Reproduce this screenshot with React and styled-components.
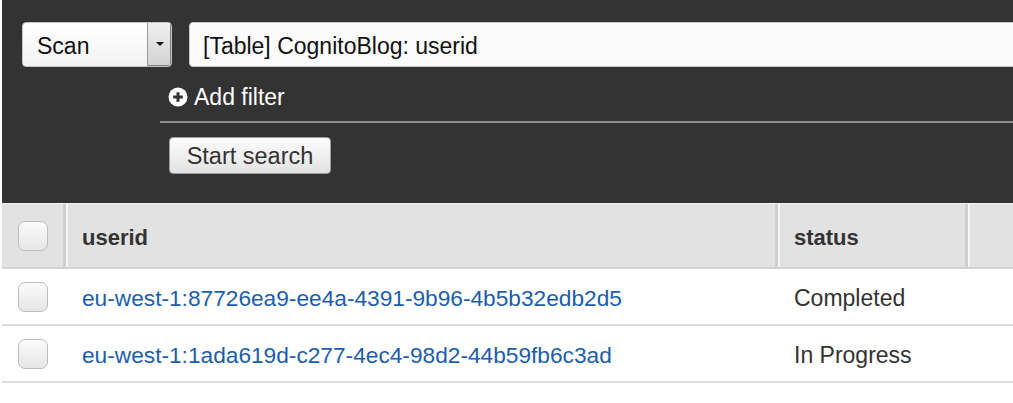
import React from "react";
import styled, { createGlobalStyle } from "styled-components";

const Global = createGlobalStyle`
  html, body { margin: 0; padding: 0; background: #fff; }
  body { font-family: "Liberation Sans", Arial, Helvetica, sans-serif; overflow: hidden; }
  * { box-sizing: border-box; }
`;

const Page = styled.div`
  width: 1013px;
  height: 403px;
  padding-left: 2px;
  background: #fff;
  overflow: hidden;
`;

const Panel = styled.div`
  background: #333333;
  padding: 22px 0 30px 20px;
  overflow: hidden;
  height: 203px;
`;

const TopRow = styled.div`
  display: flex;
  gap: 17px;
  height: 45px;
`;

const Select = styled.div`
  width: 150px;
  flex-shrink: 0;
  display: flex;
  border: 1px solid #c4c4c4;
  border-radius: 4px;
  background: linear-gradient(#ffffff, #f3f3f3);
  overflow: hidden;
`;

const SelectValue = styled.div`
  flex: 1;
  display: flex;
  align-items: center;
  padding: 3px 0 0 14px;
  font-size: 23px;
  color: #111;
`;

const SelectArrow = styled.div`
  width: 24px;
  display: flex;
  align-items: center;
  justify-content: center;
  background: linear-gradient(#f0f0f0, #d2d2d2);
  border-left: 1px solid #9a9a9a;
  box-shadow: inset -1px -1px 0 #808080;
  &::after {
    content: "";
    border-left: 4px solid transparent;
    border-right: 4px solid transparent;
    border-top: 4px solid #111;
    margin-top: -2px;
  }
`;

const TextInput = styled.div`
  width: 900px;
  flex-shrink: 0;
  display: flex;
  align-items: center;
  padding: 3px 0 0 13px;
  border: 1px solid #c8c8c8;
  border-radius: 4px;
  background: #fbfbfb;
  font-size: 23px;
  color: #111;
`;

const FilterArea = styled.div`
  margin-left: 138px;
`;

const AddFilter = styled.div`
  display: flex;
  align-items: center;
  gap: 6px;
  height: 24px;
  margin: 18px 0 12px 8px;
  color: #fff;
  font-size: 23px;
`;

const Divider = styled.div`
  height: 2px;
  background: #8e8e8e;
`;

const Button = styled.button`
  margin: 14px 0 0 9px;
  height: 37px;
  width: 162px;
  padding: 2px 0 0;
  border: 1px solid #9d9d9d;
  border-radius: 4px;
  background: linear-gradient(#fdfdfd, #e2e2e2);
  color: #333;
  font-family: inherit;
  font-size: 23.5px;
`;

const Cols = `64px 712px 190px 1fr`;

const HeaderRow = styled.div`
  display: grid;
  grid-template-columns: ${Cols};
  height: 66px;
  background: #e2e2e2;
  border-top: 1px solid #f2f2f2;
  border-bottom: 2px solid #d2d2d2;
`;

const HeadCell = styled.div`
  display: flex;
  align-items: center;
  padding-left: ${(p) => (p.$sep ? 14 : 16)}px;
  padding-top: ${(p) => (p.$text ? 5 : 0)}px;
  font-size: 22px;
  font-weight: bold;
  color: #333;
  border-left: ${(p) => (p.$sep ? "2px solid #f6f6f6" : "none")};
  box-shadow: ${(p) => (p.$sep ? "-3px 0 0 #cfcfcf" : "none")};
`;

const Row = styled.div`
  display: grid;
  grid-template-columns: ${Cols};
  height: 57px;
  border-bottom: 2px solid #dedede;
`;

const Cell = styled.div`
  display: flex;
  align-items: center;
  padding-left: 16px;
  padding-top: ${(p) => (p.$text ? 4 : 0)}px;
  font-size: 23px;
  color: #333;
`;

const Link = styled.a`
  color: #1b5ead;
  text-decoration: none;
  font-size: 22.7px;
`;

const Check = styled.div`
  width: 30px;
  height: 30px;
  border: 1px solid #bdbdbd;
  border-radius: 7px;
  background: linear-gradient(#fbfbfb, #e6e6e6);
`;

const PlusIcon = () => (
  <svg width="20" height="20" viewBox="0 0 20 20">
    <circle cx="10" cy="10" r="9.5" fill="#fff" />
    <path d="M10 5.2v9.6M5.2 10h9.6" stroke="#333" strokeWidth="3" />
  </svg>
);

const rows = [
  { id: "eu-west-1:87726ea9-ee4a-4391-9b96-4b5b32edb2d5", status: "Completed" },
  { id: "eu-west-1:1ada619d-c277-4ec4-98d2-44b59fb6c3ad", status: "In Progress" },
];

export default function App() {
  return (
    <Page>
      <Global />
      <Panel>
        <TopRow>
          <Select>
            <SelectValue>Scan</SelectValue>
            <SelectArrow />
          </Select>
          <TextInput>[Table] CognitoBlog: userid</TextInput>
        </TopRow>
        <FilterArea>
          <AddFilter>
            <PlusIcon />
            Add filter
          </AddFilter>
          <Divider />
          <Button>Start search</Button>
        </FilterArea>
      </Panel>
      <HeaderRow>
        <HeadCell>
          <Check />
        </HeadCell>
        <HeadCell $sep $text>userid</HeadCell>
        <HeadCell $sep $text>status</HeadCell>
        <HeadCell $sep />
      </HeaderRow>
      {rows.map((r) => (
        <Row key={r.id}>
          <Cell>
            <Check />
          </Cell>
          <Cell $text>
            <Link href="#">{r.id}</Link>
          </Cell>
          <Cell $text>{r.status}</Cell>
          <Cell />
        </Row>
      ))}
    </Page>
  );
}
